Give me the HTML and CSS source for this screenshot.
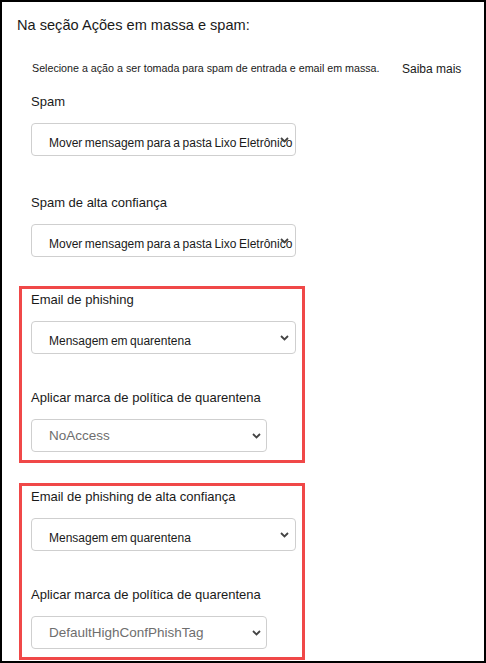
FILE: index.html
```html
<!DOCTYPE html>
<html lang="pt">
<head>
<meta charset="utf-8">
<title>Ações em massa e spam</title>
<link rel="stylesheet" href="styles.css">
</head>
<body>
<div class="frame">
  <h1 class="title">Na seção Ações em massa e spam:</h1>
  <div class="intro">
    <p class="intro-text">Selecione a ação a ser tomada para spam de entrada e email em massa.</p>
    <span class="intro-link">Saiba mais</span>
  </div>

  <div class="field field-first">
    <div class="label">Spam</div>
    <div class="select select-wide">
      <span class="select-value tight">Mover mensagem para a pasta Lixo Eletrônico</span>
      <svg class="chevron" width="9" height="6" viewBox="0 0 9 6"><path d="M1 1 L4.5 4.5 L8 1" fill="none" stroke="#444" stroke-width="1.8"/></svg>
    </div>
  </div>

  <div class="field field-gap">
    <div class="label">Spam de alta confiança</div>
    <div class="select select-wide">
      <span class="select-value tight">Mover mensagem para a pasta Lixo Eletrônico</span>
      <svg class="chevron" width="9" height="6" viewBox="0 0 9 6"><path d="M1 1 L4.5 4.5 L8 1" fill="none" stroke="#444" stroke-width="1.8"/></svg>
    </div>
  </div>

  <div class="highlight highlight-first">
    <div class="field">
      <div class="label">Email de phishing</div>
      <div class="select select-wide">
        <span class="select-value tight">Mensagem em quarentena</span>
        <svg class="chevron" width="9" height="6" viewBox="0 0 9 6"><path d="M1 1 L4.5 4.5 L8 1" fill="none" stroke="#444" stroke-width="1.8"/></svg>
      </div>
    </div>
    <div class="field field-gap-inner">
      <div class="label">Aplicar marca de política de quarentena</div>
      <div class="select select-narrow">
        <span class="select-value muted">NoAccess</span>
        <svg class="chevron" width="9" height="6" viewBox="0 0 9 6"><path d="M1 1 L4.5 4.5 L8 1" fill="none" stroke="#444" stroke-width="1.8"/></svg>
      </div>
    </div>
  </div>

  <div class="highlight highlight-second">
    <div class="field">
      <div class="label">Email de phishing de alta confiança</div>
      <div class="select select-wide">
        <span class="select-value tight">Mensagem em quarentena</span>
        <svg class="chevron" width="9" height="6" viewBox="0 0 9 6"><path d="M1 1 L4.5 4.5 L8 1" fill="none" stroke="#444" stroke-width="1.8"/></svg>
      </div>
    </div>
    <div class="field field-gap-inner">
      <div class="label">Aplicar marca de política de quarentena</div>
      <div class="select select-narrow">
        <span class="select-value muted">DefaultHighConfPhishTag</span>
        <svg class="chevron" width="9" height="6" viewBox="0 0 9 6"><path d="M1 1 L4.5 4.5 L8 1" fill="none" stroke="#444" stroke-width="1.8"/></svg>
      </div>
    </div>
  </div>
</div>
</body>
</html>
```

FILE: styles.css
```css
* { box-sizing: border-box; }

html, body {
  margin: 0;
  padding: 0;
  background: #fff;
}

body {
  font-family: "Liberation Sans", Arial, sans-serif;
  color: #1a1a1a;
}

.frame {
  width: 486px;
  height: 663px;
  border: 2px solid #000;
  overflow: hidden;
  background: #fff;
}

.title {
  margin: 14px 0 0 15px;
  font-size: 14.6px;
  line-height: 18px;
  font-weight: normal;
  color: #1a1a1a;
}

.intro {
  display: grid;
  grid-template-columns: 370px auto;
  align-items: end;
  margin-top: 27px;
  padding-left: 30px;
}

.intro-text {
  margin: 0;
  font-size: 10.7px;
  line-height: 14px;
  color: #1a1a1a;
}

.intro-link {
  font-size: 12px;
  line-height: 14px;
  color: #1a1a1a;
  position: relative;
  top: 1px;
}

.field {
  display: flex;
  flex-direction: column;
  padding-left: 29px;
}

.field-first { margin-top: 19px; }
.field-gap { margin-top: 39px; }

.highlight .field { padding-left: 0; }
.field-gap-inner { margin-top: 36px; }

.label {
  font-size: 13px;
  line-height: 16px;
  color: #1a1a1a;
}

.select {
  display: grid;
  margin-top: 13px;
  height: 33px;
  border: 1px solid #cfcfcf;
  border-radius: 4px;
  background: #fff;
  overflow: hidden;
}

.select > * {
  grid-area: 1 / 1;
}

.select-wide { width: 265px; }
.select-narrow { width: 236px; }

.select-value {
  min-width: 0;
  padding: 11px 0 0 17px;
  font-size: 12px;
  line-height: 16px;
  white-space: nowrap;
  color: #1a1a1a;
}

.select-value.tight {
  word-spacing: -0.8px;
}

.select-value.muted {
  padding-top: 8px;
  font-size: 13.5px;
  color: #6e6e6e;
}

.chevron {
  justify-self: end;
  align-self: center;
  margin-right: 6px;
}

.select-narrow .chevron { margin-right: 5px; }

.highlight {
  width: 286px;
  margin-left: 17px;
  border: 3px solid #f04848;
  padding: 3px 6px 8px 9px;
}

.highlight-first { margin-top: 29px; }
.highlight-second { margin-top: 20px; }
```
